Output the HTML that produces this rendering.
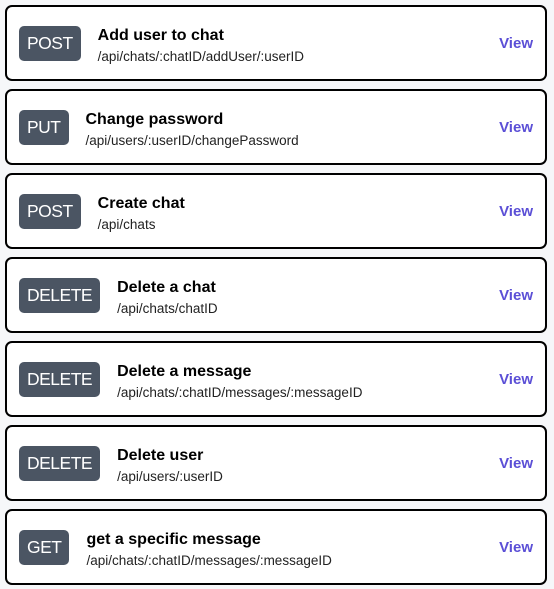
<!DOCTYPE html>
<html><head><style>
body{margin:0;background:#f6f7f9;font-family:"Liberation Sans",sans-serif;width:554px;height:589px;overflow:hidden}
.c{position:absolute;left:5px;width:538px;height:72px;border:2px solid #000;border-radius:7px;background:#fff;display:flex;align-items:center}
.b{margin-left:12px;height:35px;padding:0 8px;background:#4b5563;color:#fff;border-radius:5px;font-size:17.5px;display:flex;align-items:center;box-sizing:border-box;letter-spacing:-0.5px}
.t{margin-left:17px;margin-top:3px}
.h{font-size:16px;color:#000;font-weight:bold;line-height:20px}
.p{font-size:13.5px;color:#222;margin-top:3px}
.v{position:absolute;right:12px;top:28px;color:#5b4fd6;font-size:15px;font-weight:bold}
</style></head><body>
<div class="c" style="top:5px"><div class="b">POST</div><div class="t"><div class="h">Add user to chat</div><div class="p">/api/chats/:chatID/addUser/:userID</div></div><div class="v">View</div></div>
<div class="c" style="top:89px"><div class="b">PUT</div><div class="t"><div class="h">Change password</div><div class="p">/api/users/:userID/changePassword</div></div><div class="v">View</div></div>
<div class="c" style="top:173px"><div class="b">POST</div><div class="t"><div class="h">Create chat</div><div class="p">/api/chats</div></div><div class="v">View</div></div>
<div class="c" style="top:257px"><div class="b">DELETE</div><div class="t"><div class="h">Delete a chat</div><div class="p">/api/chats/chatID</div></div><div class="v">View</div></div>
<div class="c" style="top:341px"><div class="b">DELETE</div><div class="t"><div class="h">Delete a message</div><div class="p">/api/chats/:chatID/messages/:messageID</div></div><div class="v">View</div></div>
<div class="c" style="top:425px"><div class="b">DELETE</div><div class="t"><div class="h">Delete user</div><div class="p">/api/users/:userID</div></div><div class="v">View</div></div>
<div class="c" style="top:509px"><div class="b">GET</div><div class="t"><div class="h">get a specific message</div><div class="p">/api/chats/:chatID/messages/:messageID</div></div><div class="v">View</div></div>
</body></html>
